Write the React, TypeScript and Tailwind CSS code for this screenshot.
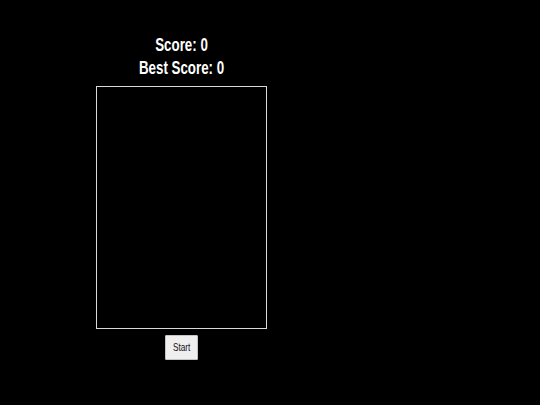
export default function App() {
  return (
    <div className="w-[540px] h-[405px] bg-black overflow-hidden" style={{ fontFamily: '"Liberation Sans", Arial, sans-serif' }}>
      <div className="ml-[96px] w-[171px] pt-[34px] flex flex-col items-center">
        <div className="text-white font-bold text-[18px] leading-[23px] text-center whitespace-nowrap scale-x-[0.74]">Score: 0</div>
        <div className="text-white font-bold text-[18px] leading-[23px] text-center whitespace-nowrap scale-x-[0.74]">Best Score: 0</div>
        <div className="mt-[6px] w-[171px] h-[243px] border border-[#d9d9d9]" />
        <button className="mt-[6px] w-[33px] h-[25px] bg-[#efefef] border border-[#c4c4c4] text-[#111] rounded-[1px] flex items-center justify-center">
          <span className="text-[11px] scale-x-[0.75] whitespace-nowrap">Start</span>
        </button>
      </div>
    </div>
  );
}
